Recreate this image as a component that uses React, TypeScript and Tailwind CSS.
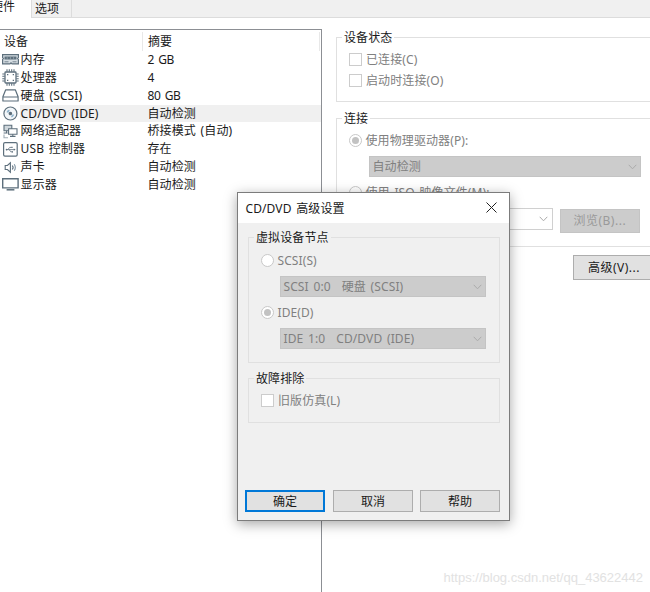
import React from 'react';

interface Device {
  name: string;
  summary: string;
  icon: React.ReactNode;
  active?: boolean;
}

const iconProps = {
  width: 17,
  height: 17,
  viewBox: '0 0 17 17',
  fill: 'none',
  stroke: '#5d6f7c',
  strokeWidth: 1.2,
};

const MemoryIcon = () => (
  <svg {...iconProps}>
    <path d="M.6 3.6h15.8v3l-.8.9.8 1v4.4H10l-1-1-1 1H.6V8.5l.8-1-.8-.9z" fill="#d5dde2" />
    <path d="M2.5 5.5h12v3h-12z" fill="#5d6f7c" stroke="none" />
    <path d="M5.2 6v2M8.4 6v2M11.6 6v2" stroke="#a9b7c0" strokeWidth=".6" />
    <path d="M2.5 10.8h4M10.5 10.8h4" strokeWidth=".8" />
  </svg>
);

const CpuIcon = () => (
  <svg {...iconProps}>
    <path d="M5 .3v2.5M7.3.3v2.5M9.7.3v2.5M12 .3v2.5M5 14.2v2.5M7.3 14.2v2.5M9.7 14.2v2.5M12 14.2v2.5M.3 5h2.5M.3 7.3h2.5M.3 9.7h2.5M.3 12h2.5M14.2 5h2.5M14.2 7.3h2.5M14.2 9.7h2.5M14.2 12h2.5" strokeWidth="1.1" />
    <rect x="3" y="3" width="11" height="11" rx=".8" fill="#fff" strokeWidth="1.3" />
    <path d="M5 5h1.3v1.3H5zM10.7 5H12v1.3h-1.3zM5 10.7h1.3V12H5zM10.7 10.7H12V12h-1.3z" fill="#5d6f7c" stroke="none" />
  </svg>
);

const DiskIcon = () => (
  <svg {...iconProps}>
    <path d="M3.7 2.8h9.6l2.8 7v4.2H.9V9.8zM1 10h15" strokeLinejoin="round" />
  </svg>
);

const DiscIcon = () => (
  <svg {...iconProps}>
    <circle cx="8.4" cy="8.5" r="6.5" fill="#f2f6f9" />
    <circle cx="8.4" cy="8.5" r="1.2" fill="#5d6f7c" />
    <path d="M4.6 7.2c.3-1.2 1.2-2.2 2.5-2.6L7.8 6c-.8.3-1.4.9-1.6 1.7zM12.2 9.8c-.3 1.2-1.2 2.2-2.5 2.6L9 11c.8-.3 1.4-.9 1.6-1.7z" fill="#8fb3cc" stroke="none" />
  </svg>
);

const NetworkIcon = () => (
  <svg {...iconProps} strokeWidth="1.1">
    <path d="M2 2.2h7.8v5.6H2z" fill="#cfd7dc" />
    <path d="M4.6 7.8v2M1.6 10h4" />
    <path d="M6.6 5.8H15v5.4H6.6z" fill="#fff" />
    <path d="M10.8 11.3v1.8M8 13.4h5.5" />
    <path d="M2 11.5v3.2h4" stroke="#a0adb5" />
  </svg>
);

const UsbIcon = () => (
  <svg {...iconProps}>
    <rect x="1.6" y="1.6" width="13.6" height="13.6" rx="1.4" />
    <path d="M4 8.6h9M6 8.4l1.7-2h2M7.3 8.8l1.5 2h1.7" strokeWidth=".8" />
    <circle cx="4.6" cy="8.6" r=".9" fill="#5d6f7c" stroke="none" />
    <path d="m11.8 7.4 1.8 1.2-1.8 1.2zM9.4 5.8h1.2V7H9.4zM9.8 10.2H11v1.2H9.8z" fill="#5d6f7c" stroke="none" />
  </svg>
);

const SoundIcon = () => (
  <svg {...iconProps} strokeWidth="1.1">
    <path d="M3.2 6.5h2.2l3-2.7v9.4l-3-2.7H3.2z" />
    <path d="M10.3 6.5c.8 1 .8 3 0 4" />
    <path d="M12.2 5.2c1.3 1.9 1.3 4.7 0 6.6" stroke="#8296a5" />
  </svg>
);

const DisplayIcon = () => (
  <svg {...iconProps}>
    <path d="M.7 2.7h15.4v9.2H.7z" strokeWidth="1.4" />
    <path d="M4.6 13.8h7.8" strokeWidth="1.5" />
  </svg>
);

const devices: Device[] = [
  { name: '内存', summary: '2 GB', icon: <MemoryIcon /> },
  { name: '处理器', summary: '4', icon: <CpuIcon /> },
  { name: '硬盘 (SCSI)', summary: '80 GB', icon: <DiskIcon /> },
  { name: 'CD/DVD (IDE)', summary: '自动检测', icon: <DiscIcon />, active: true },
  { name: '网络适配器', summary: '桥接模式 (自动)', icon: <NetworkIcon /> },
  { name: 'USB 控制器', summary: '存在', icon: <UsbIcon /> },
  { name: '声卡', summary: '自动检测', icon: <SoundIcon /> },
  { name: '显示器', summary: '自动检测', icon: <DisplayIcon /> },
];

const Chevron = () => (
  <svg className="shrink-0" width="9" height="6" viewBox="0 0 9 6" fill="none" stroke="#ababab">
    <path d="M.7.8 4.5 4.8 8.3.8" />
  </svg>
);

const Checkbox = ({ label }: { label: string }) => (
  <label className="flex h-[21px] items-center gap-[4px] text-[#808080]">
    <span className="size-[13px] shrink-0 border border-[#cccccc] bg-white" />
    {label}
  </label>
);

const Radio = ({ label, checked }: { label: string; checked?: boolean }) => (
  <label className="flex h-[20px] items-center gap-[3.5px] text-[#808080]">
    <span className="flex size-[13px] shrink-0 items-center justify-center rounded-full border border-[#c8c8c8] bg-white">
      {checked && <span className="size-[7px] rounded-full bg-[#c2c2c2]" />}
    </span>
    <span className="pt-px">{label}</span>
  </label>
);

const Select = ({ children }: { children: React.ReactNode }) => (
  <div className="flex h-[21px] items-center justify-between border border-[#c4c4c4] bg-[#cccccc] pl-[2.5px] pr-[3px] text-[#808080]">
    <span className="flex gap-[11px]">{children}</span>
    <Chevron />
  </div>
);

interface GroupProps {
  title: string;
  className: string;
  legendClass: string;
  children: React.ReactNode;
}

const Group = ({ title, className, legendClass, children }: GroupProps) => (
  <section className={`border ${className}`}>
    <h3 className={`-mt-[8px] ml-[5px] flex h-[15px] w-fit items-center px-[2px] ${legendClass}`}>{title}</h3>
    {children}
  </section>
);

const DeviceList = () => (
  <div className="mt-[11px] h-[563px] w-[322px] shrink-0 border-t border-r border-[#8c8f94]">
    <div className="flex h-[21px] items-center pt-[2px]">
      <span className="w-[142px] pl-[4px]">设备</span>
      <span className="flex h-[19px] w-[178px] items-center border-x border-[#e8e8e8] pl-[5px]">摘要</span>
    </div>
    {devices.map((device) => (
      <div key={device.name} className="flex h-[17.86px] items-center">
        <span className="w-[20px] shrink-0 pl-[2px]">{device.icon}</span>
        <span className={`flex h-full w-[122px] items-center pl-[0.6px] ${device.active ? 'bg-[#f0f0f0]' : ''}`}>
          {device.name}
        </span>
        <span
          className={`flex h-full flex-1 items-center pl-[5.5px] ${device.active ? 'bg-[#f0f0f0]' : ''} ${device.summary.endsWith('GB') ? 'tracking-[-0.4px] [word-spacing:1.5px]' : ''}`}
        >
          {device.summary}
        </span>
      </div>
    ))}
  </div>
);

const DeviceSettings = () => (
  <div className="flex min-w-0 flex-1 flex-col pl-[14px] pt-[19px]">
    <Group title="设备状态" className="-mr-px h-[65px] border-[#e0e0e0]" legendClass="bg-white">
      <div className="pl-[12px] pt-[4px]">
        <Checkbox label="已连接(C)" />
        <Checkbox label="启动时连接(O)" />
      </div>
    </Group>
    <Group title="连接" className="-mr-px mt-[16px] h-[129px] border-[#e0e0e0]" legendClass="bg-white">
      <div className="pl-[12px] pr-[10px] pt-[4px]">
        <Radio label="使用物理驱动器(P):" checked />
        <div className="mt-[6px] -mr-px pl-[20px]">
          <Select>自动检测</Select>
        </div>
        <div className="mt-[5px]">
          <Radio label="使用 ISO 映像文件(M):" />
        </div>
        <div className="mt-[6px] flex gap-[7px] pl-[20px]">
          <div className="flex h-[22px] w-[185px] items-center justify-end border border-[#d0d0d0] bg-white pr-[4px]">
            <Chevron />
          </div>
          <button type="button" className="mt-px h-[24px] w-[81px] border border-[#c4c4c4] bg-[#cccccc] tracking-[0.5px] text-[#9a9a9a]">
            浏览(B)...
          </button>
        </div>
      </div>
    </Group>
    <button type="button" className="mt-[8px] -mr-px h-[25px] w-[78px] self-end border border-[#adadad] bg-[#e1e1e1] pl-[4px] tracking-[0.5px]">
      高级(V)...
    </button>
  </div>
);

const AdvancedDialog = () => (
  <div className="absolute left-[237px] top-[192px] flex h-[329px] w-[273px] flex-col border border-[#7c7c7c] bg-[#f0f0f0] shadow-[0_3px_12px_rgba(0,0,0,0.35)]">
    <header className="flex h-[30px] shrink-0 items-center justify-between bg-white pl-[7.5px] pr-[12px]">
      <h2 className="pt-px">CD/DVD 高级设置</h2>
      <svg className="-mt-px" width="11" height="11" viewBox="0 0 11 11" stroke="#222" fill="none">
        <path d="m.5.5 10 10M10.5.5l-10 10" />
      </svg>
    </header>
    <div className="flex flex-1 flex-col px-[10px] pt-[14px]">
      <Group title="虚拟设备节点" className="-mr-px h-[126px] border-[#e0e0e0]" legendClass="bg-[#f0f0f0]">
        <div className="pl-[12px] pr-[13px] pt-[5px]">
          <Radio label="SCSI(S)" />
          <div className="mt-[6px] pl-[19px]">
            <Select>
              <span>SCSI 0:0</span>
              <span>硬盘 (SCSI)</span>
            </Select>
          </div>
          <div className="mt-[5px]">
            <Radio label="IDE(D)" checked />
          </div>
          <div className="mt-[6px] pl-[19px]">
            <Select>
              <span>IDE 1:0</span>
              <span>CD/DVD (IDE)</span>
            </Select>
          </div>
        </div>
      </Group>
      <Group title="故障排除" className="-mr-px mt-[15px] h-[45px] border-[#e0e0e0]" legendClass="bg-[#f0f0f0]">
        <div className="pl-[12px] pt-[4px]">
          <Checkbox label="旧版仿真(L)" />
        </div>
      </Group>
    </div>
    <footer className="flex gap-[8px] pb-[8px] pl-[7px]">
      <button type="button" className="h-[22px] w-[80px] border-2 border-[#0078d7] bg-[#e1e1e1] pt-px">
        确定
      </button>
      <button type="button" className="h-[22px] w-[80px] border border-[#adadad] bg-[#e1e1e1] pt-px">
        取消
      </button>
      <button type="button" className="-ml-px h-[22px] w-[80px] border border-[#adadad] bg-[#e1e1e1] pt-px">
        帮助
      </button>
    </footer>
  </div>
);

const App: React.FC = () => {
  return (
    <div className="relative h-[592px] w-[650px] overflow-hidden bg-white font-['Noto_Sans','Noto_Sans_CJK_SC',sans-serif] text-[12px] leading-none tracking-[0.1px] whitespace-nowrap text-[#1a1a1a] [word-spacing:1.5px]">
      <nav className="flex h-[18px] bg-white">
        <div className="w-[31px] pt-px">
          <span className="-ml-[9px]">硬件</span>
        </div>
        <div className="flex w-[41px] items-center border-x border-b border-[#dcdcdc] bg-[#f0f0f0] pl-[3px]">选项</div>
        <div className="flex-1 border-b border-[#dcdcdc] bg-[#f0f0f0]" />
      </nav>
      <main className="flex h-[574px]">
        <DeviceList />
        <DeviceSettings />
      </main>
      <AdvancedDialog />
      <span className="absolute right-[7px] bottom-[8px] font-['Liberation_Sans',sans-serif] text-[13px] tracking-normal text-[#e2e2e2]">
        https://blog.csdn.net/qq_43622442
      </span>
    </div>
  );
};

export default App;
